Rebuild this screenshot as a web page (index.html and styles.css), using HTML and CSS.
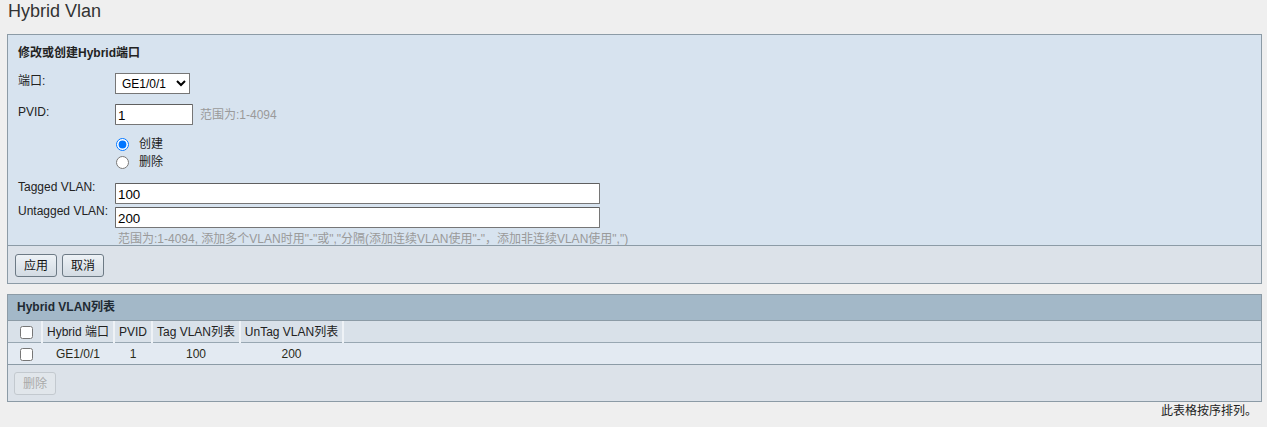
FILE: index.html
```html
<!DOCTYPE html>
<html lang="zh-CN">
<head>
<meta charset="utf-8">
<title>Hybrid Vlan</title>
<link rel="stylesheet" href="styles.css">
</head>
<body>
<h1 class="page-title">Hybrid Vlan</h1>

<section class="panel form-panel">
  <div class="panel-body">
    <div class="form-title">修改或创建Hybrid端口</div>

    <div class="row row-port">
      <label class="lbl">端口:</label>
      <div class="field">
        <select class="sel"><option>GE1/0/1</option></select>
      </div>
    </div>

    <div class="row row-pvid">
      <label class="lbl">PVID:</label>
      <div class="field field-inline">
        <input class="txt txt-short" type="text" value="1">
        <span class="hint">范围为:1-4094</span>
      </div>
    </div>

    <div class="row row-radio">
      <span class="lbl"></span>
      <div class="field radios">
        <label class="radio"><input type="radio" name="op" checked><span>创建</span></label>
        <label class="radio"><input type="radio" name="op"><span>删除</span></label>
      </div>
    </div>

    <div class="row row-tagged">
      <label class="lbl lbl-raise">Tagged VLAN:</label>
      <div class="field"><input class="txt txt-long" type="text" value="100"></div>
    </div>

    <div class="row row-untagged">
      <label class="lbl lbl-raise">Untagged VLAN:</label>
      <div class="field"><input class="txt txt-long" type="text" value="200"></div>
    </div>

    <div class="row row-hint">
      <span class="lbl"></span>
      <div class="field hint hint-long">范围为:1-4094, 添加多个VLAN时用"-"或","分隔(添加连续VLAN使用"-"，添加非连续VLAN使用",")</div>
    </div>
  </div>
  <div class="panel-foot">
    <button class="btn" type="button">应用</button>
    <button class="btn" type="button">取消</button>
  </div>
</section>

<section class="panel list-panel">
  <div class="panel-caption">Hybrid VLAN列表</div>
  <table class="grid">
    <thead>
      <tr>
        <th class="c-check"><input type="checkbox"></th>
        <th class="c-port">Hybrid 端口</th>
        <th class="c-pvid">PVID</th>
        <th class="c-tag">Tag VLAN列表</th>
        <th class="c-untag">UnTag VLAN列表</th>
        <th class="c-fill"></th>
      </tr>
    </thead>
    <tbody>
      <tr>
        <td class="c-check"><input type="checkbox"></td>
        <td>GE1/0/1</td>
        <td>1</td>
        <td>100</td>
        <td>200</td>
        <td class="c-fill"></td>
      </tr>
    </tbody>
  </table>
  <div class="panel-foot list-foot">
    <button class="btn" type="button" disabled>删除</button>
  </div>
</section>

<p class="note">此表格按序排列。</p>
</body>
</html>
```

FILE: styles.css
```css
html, body {
  margin: 0;
  padding: 0;
}

body {
  background: #efefef;
  font-family: "Liberation Sans", Arial, "Noto Sans CJK SC", sans-serif;
  font-size: 12px;
  line-height: 14px;
  color: #222;
}

.page-title {
  margin: 0 0 12px;
  padding-left: 8px;
  font-size: 18px;
  line-height: 22px;
  font-weight: normal;
  color: #333;
}

.panel {
  margin: 0 5px 0 7px;
  border: 1px solid #8c9ba6;
}

.form-panel .panel-body {
  background: #d7e3ef;
  padding: 10px 10px 0 10px;
}

.form-title {
  font-weight: bold;
  line-height: 16px;
  margin-bottom: 12px;
  color: #222;
}

.row {
  display: grid;
  grid-template-columns: 97px auto;
  align-items: start;
}

.lbl {
  line-height: 16px;
  color: #222;
}

.lbl-raise {
  line-height: 14px;
  margin-top: -3px;
}

.field-inline {
  display: flex;
  align-items: center;
  gap: 7px;
}

.row-pvid { margin-top: 10px; }
.row-radio { margin-top: 10px; }
.row-tagged { margin-top: 12px; }
.row-untagged { margin-top: 3px; }
.row-hint { margin-top: 5px; }

.sel {
  box-sizing: border-box;
  width: 75px;
  height: 21px;
  margin: 0;
  padding: 0 0 0 2px;
  font-family: inherit;
  font-size: 12px;
  color: #000;
  background: #fff;
  border: 1px solid #767676;
  border-radius: 0;
}

.txt {
  box-sizing: border-box;
  height: 21px;
  margin: 0;
  padding: 1px 2px 0;
  font-family: inherit;
  font-size: 13.33px;
  color: #000;
  background: #fff;
  border: 1px solid #767676;
  border-top-color: #5f5f5f;
  border-left-color: #6a6a6a;
  border-radius: 1px;
  outline: none;
}

.txt-short { width: 78px; }
.txt-long { width: 485px; }

.hint {
  color: #9a9a9a;
}

.hint-long {
  line-height: 12px;
  padding-left: 3px;
  white-space: nowrap;
}

.radios {
  display: flex;
  flex-direction: column;
}

.radio {
  display: flex;
  align-items: center;
  height: 18px;
  color: #222;
}

.radio input {
  width: 13px;
  height: 13px;
  margin: 0 10px 0 1px;
}

.panel-foot {
  display: flex;
  gap: 5px;
  background: #dce2e9;
  border-top: 1px solid #8c9ba6;
  padding: 8px 7px 6px;
}

.btn {
  box-sizing: border-box;
  height: 23px;
  padding: 0 8px;
  margin: 0;
  font-family: inherit;
  font-size: 12px;
  line-height: 14px;
  color: #111;
  background: linear-gradient(#eef2f6, #d3dbe3);
  border: 1px solid #6d7a85;
  border-radius: 3px;
}

.btn:disabled {
  color: #a9a9a9;
  background: #e1e6eb;
  border-color: #c3c9cf;
}

.list-panel {
  margin-top: 10px;
}

.panel-caption {
  height: 25px;
  line-height: 25px;
  padding-left: 9px;
  font-weight: bold;
  color: #1f2a33;
  background: #a3b8c8;
  border-bottom: 1px solid #8c9ba6;
}

.grid {
  width: 100%;
  border-collapse: collapse;
  border-spacing: 0;
}

.grid th,
.grid td {
  height: 21px;
  padding: 0;
  text-align: center;
  font-weight: normal;
  white-space: nowrap;
  color: #222;
}

.grid thead tr {
  background: #d9e1e9;
  border-bottom: 1px solid #98a7b2;
}

.grid thead th {
  border-right: 2px solid #eef2f6;
}

.grid thead th.c-fill {
  border-right: 0;
}

.grid tbody tr {
  background: #e3eaf2;
}

.grid tbody td {
  color: #2a2a1a;
}

.grid .c-check {
  width: 21px;
  padding-left: 12px;
  text-align: left;
}

.grid .c-check input {
  width: 13px;
  height: 13px;
  margin: 0;
  vertical-align: middle;
}

.grid .c-port { width: 70px; }
.grid .c-pvid { width: 36px; }
.grid .c-tag { width: 86px; }
.grid .c-untag { width: 101px; }

.list-foot {
  padding: 7px 6px 6px;
  border-top: 1px solid #8c9ba6;
}

.note {
  margin: 2px 10px 0 0;
  text-align: right;
  line-height: 14px;
  color: #222;
}
```
